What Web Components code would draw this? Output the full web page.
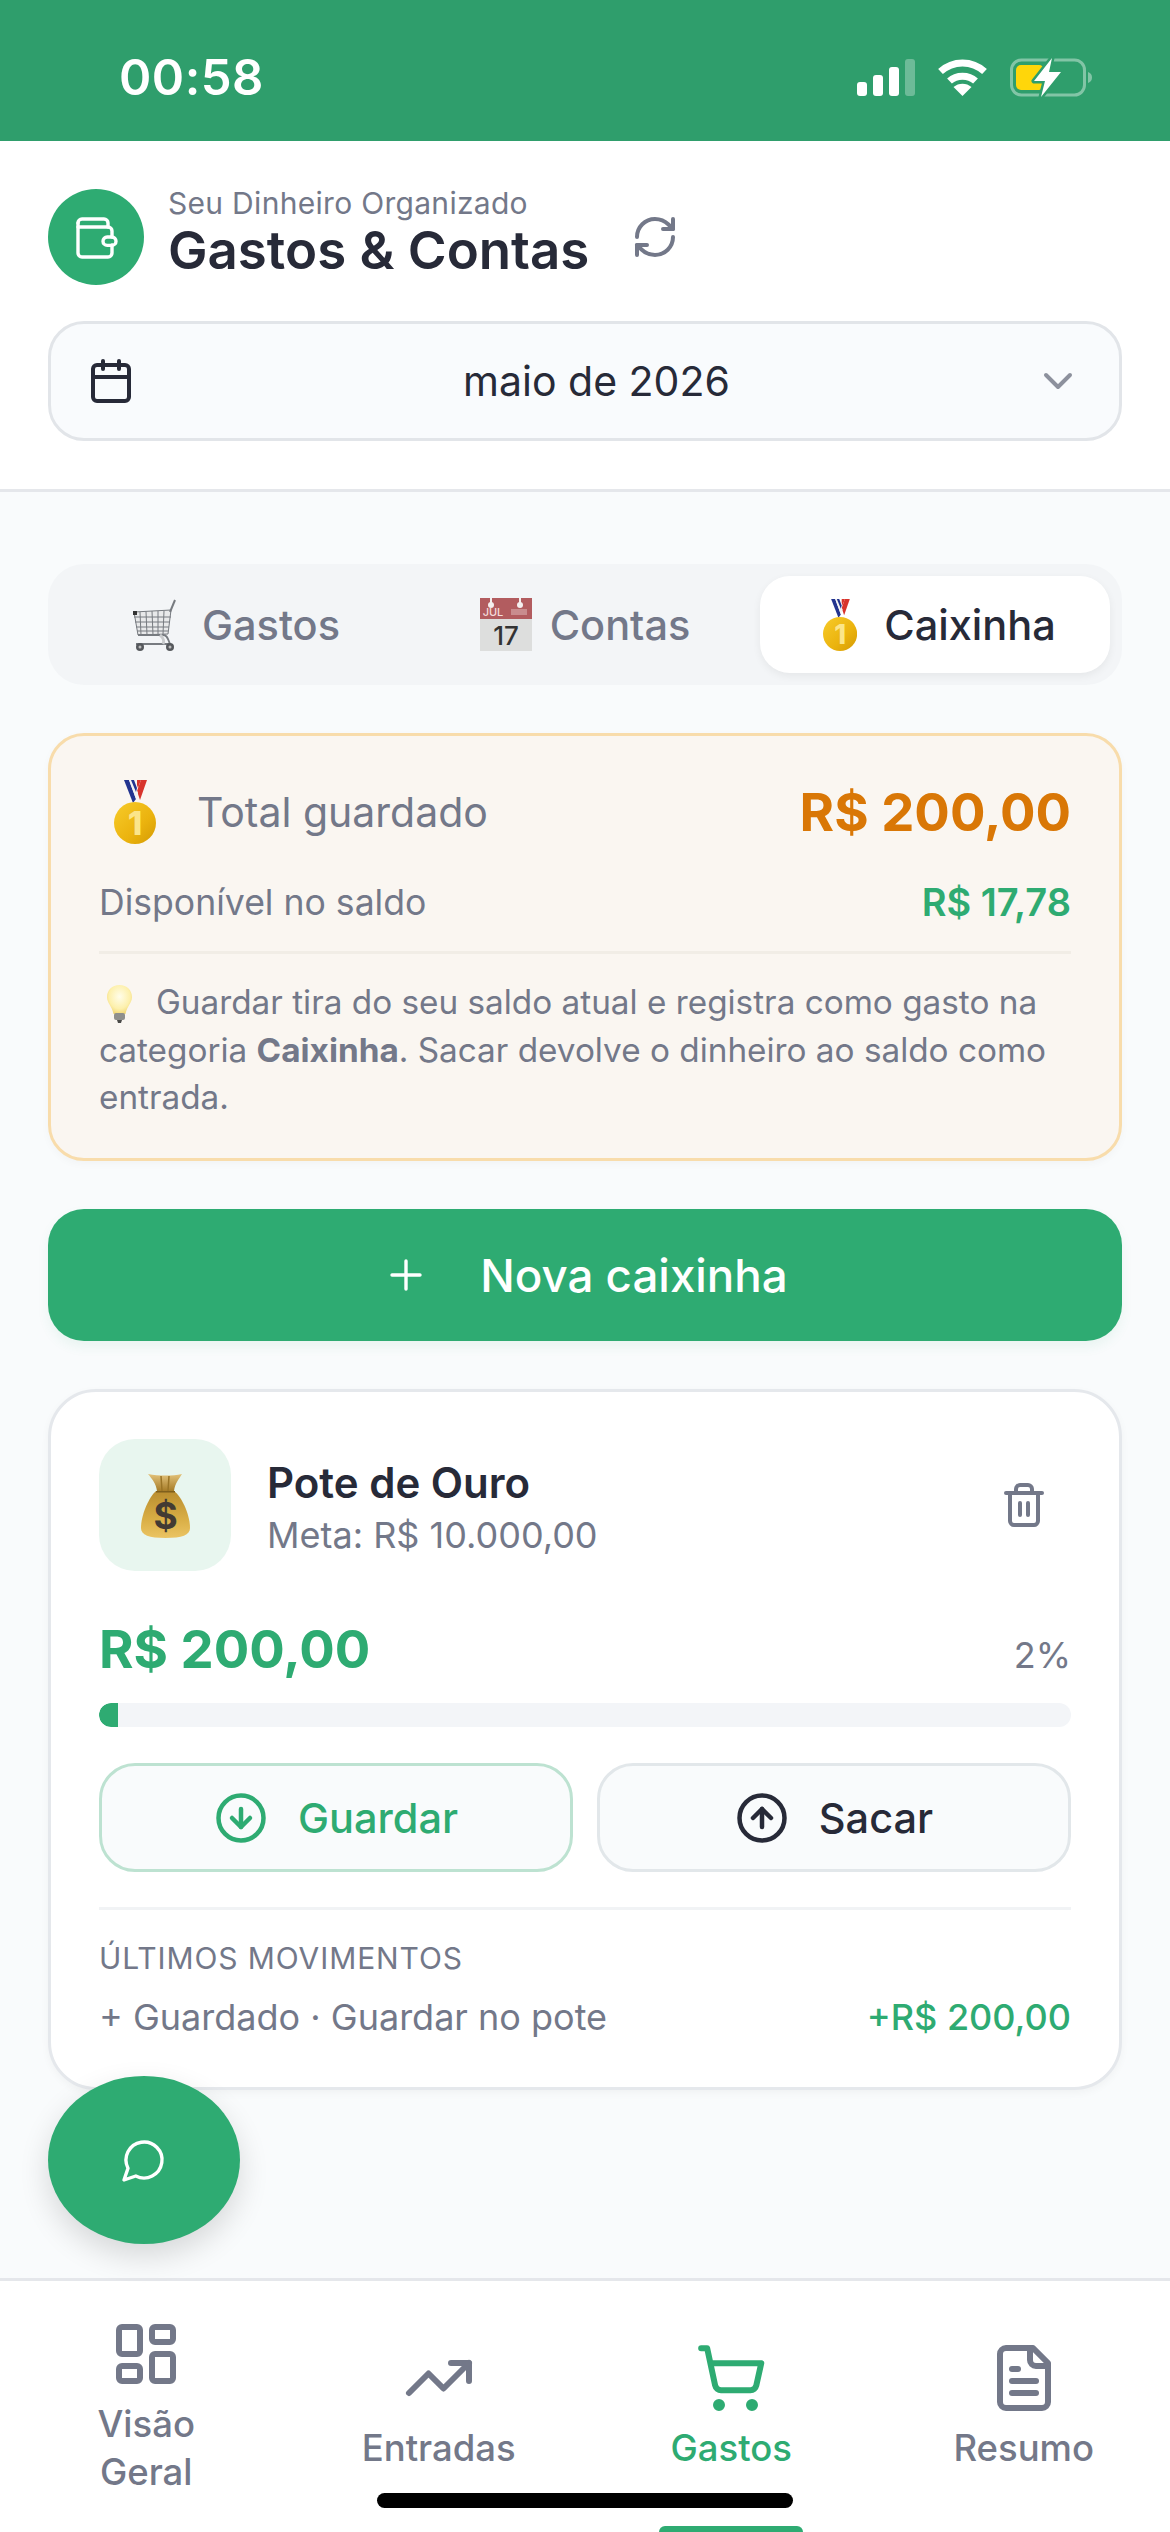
<!DOCTYPE html>
<html lang="pt-BR">
<head>
<meta charset="utf-8">
<title>Gastos & Contas</title>
<style>
  html, body { margin: 0; padding: 0; }
  body { font-family: Inter, "Noto Sans", sans-serif; color: #272a38; background: #f9fbfc; }
</style>
</head>
<body>
<app-shell>
  <status-bar time="00:58"></status-bar>
  <app-header title="Gastos &amp; Contas" subtitle="Seu Dinheiro Organizado" month="maio de 2026"></app-header>
  <main-area>
    <tab-bar>
      <tab-item><emoji-icon slot="icon" name="cart"></emoji-icon>Gastos</tab-item>
      <tab-item><emoji-icon slot="icon" name="calendar"></emoji-icon>Contas</tab-item>
      <tab-item active><emoji-icon slot="icon" name="medal" scale="0.8125" box="52"></emoji-icon>Caixinha</tab-item>
    </tab-bar>
    <summary-card total="R$ 200,00" available="R$ 17,78">Guardar tira do seu saldo atual e registra como gasto na<br>categoria <b>Caixinha</b>. Sacar devolve o dinheiro ao saldo como<br>entrada.</summary-card>
    <primary-button>Nova caixinha</primary-button>
    <pot-card name="Pote de Ouro" goal="Meta: R$ 10.000,00" amount="R$ 200,00" percent="2"
      moves-title="Últimos movimentos" move="+ Guardado · Guardar no pote" move-value="+R$ 200,00"></pot-card>
  </main-area>
  <bottom-nav>
    <nav-item icon="dashboard">Visão<br>Geral</nav-item>
    <nav-item icon="trending">Entradas</nav-item>
    <nav-item icon="cart" active>Gastos</nav-item>
    <nav-item icon="file">Resumo</nav-item>
  </bottom-nav>
  <chat-fab></chat-fab>
  <home-indicator></home-indicator>
</app-shell>

<script>
  const ICONS = {
    wallet: `<path d="M3 5v15a2 2 0 0 0 2 2h13a2 2 0 0 0 2-2v-4"/><path d="M20 12V9a2 2 0 0 0-2-2H3"/><path d="M3 5a2 2 0 0 1 2-2h11a2 2 0 0 1 2 2v2"/><rect x="15.500" y="12" width="6.500" height="4.200" rx="2.100"/>`,
    refresh: `<path d="M3 12a9 9 0 0 1 9-9 9.75 9.75 0 0 1 6.74 2.74L21 8"/><path d="M21 3v5h-5"/><path d="M21 12a9 9 0 0 1-9 9 9.75 9.75 0 0 1-6.74-2.74L3 16"/><path d="M8 16H3v5"/>`,
    calendar: `<path d="M8 2v4"/><path d="M16 2v4"/><rect x="3" y="4" width="18" height="18" rx="2"/><path d="M3 10h18"/>`,
    chevron: `<path d="m6 9 6 6 6-6"/>`,
    plus: `<path d="M5 12h14"/><path d="M12 5v14"/>`,
    trash: `<path d="M3 6h18"/><path d="M19 6v14c0 1-1 2-2 2H7c-1 0-2-1-2-2V6"/><path d="M8 6V4c0-1 1-2 2-2h4c1 0 2 1 2 2v2"/><path d="M10 11v6"/><path d="M14 11v6"/>`,
    down: `<circle cx="12" cy="12" r="10"/><path d="M12 8v8"/><path d="m8 12 4 4 4-4"/>`,
    up: `<circle cx="12" cy="12" r="10"/><path d="m16 12-4-4-4 4"/><path d="M12 16V8"/>`,
    message: `<path d="M7.9 20A9 9 0 1 0 4 16.1L2 22Z"/>`,
    dashboard: `<rect x="3" y="3" width="7" height="9" rx="1"/><rect x="14" y="3" width="7" height="5" rx="1"/><rect x="14" y="12" width="7" height="9" rx="1"/><rect x="3" y="16" width="7" height="5" rx="1"/>`,
    trending: `<path d="m22 7-8.500 8.500-5-5L2 17"/><path d="M16 7h6v6"/>`,
    cart: `<circle cx="8" cy="21" r="1"/><circle cx="19" cy="21" r="1"/><path d="M2.050 2.050h2l2.660 12.420a2 2 0 0 0 2 1.580h9.780a2 2 0 0 0 1.950-1.570l1.650-7.430H5.120"/>`,
    file: `<path d="M15 2H6a2 2 0 0 0-2 2v16a2 2 0 0 0 2 2h12a2 2 0 0 0 2-2V7Z"/><path d="M14 2v4a2 2 0 0 0 2 2h4"/><path d="M10 9H8"/><path d="M16 13H8"/><path d="M16 17H8"/>`
  };

  class AppIcon extends HTMLElement {
    connectedCallback() {
      const size = this.getAttribute("size") || 54;
      const stroke = this.getAttribute("stroke") || 2;
      this.attachShadow({ mode: "open" });
      this.shadowRoot.innerHTML = `
        <style>
          :host { display: block; width: ${size}px; height: ${size}px; flex: none; }
          svg { display: block; width: 100%; height: 100%; }
        </style>
        <svg viewBox="0 0 24 24" fill="none" stroke="currentColor" stroke-width="${stroke}" stroke-linecap="round" stroke-linejoin="round">${ICONS[this.getAttribute("name")]}</svg>
      `;
    }
  }
  customElements.define("app-icon", AppIcon);

  // the reference uses colour emoji, no emoji font here so they are drawn
  const EMOJI = {
    cart: { w: 54, h: 54, svg: `
      <g fill="none" stroke="#777b80" stroke-width="1">
        <path d="M4 14 L41 12 L38 36 L8 37 Z" fill="#e8e9ea"/>
        <path d="M4 19H41M5 24H40M6 29H39M7 33H38M10 14l1 23M16 13.500l1 23.500M22 13l1 24M28 13l0 24M34 13l-1 23"/>
        <path d="M40 14 L45 2" stroke-width="2"/>
        <path d="M8 37 L33 37 C38 37 38 42 40 46 L6 46" stroke-width="1.800" fill="none"/>
        <path d="M30 37 C34 40 34 44 33 46" stroke="#c9cbcd" stroke-width="3"/>
      </g>
      <rect x="3" y="13" width="4" height="4" fill="#333"/>
      <circle cx="10" cy="49" r="4" fill="#55585c"/><circle cx="40" cy="49" r="4" fill="#55585c"/>
      <circle cx="10" cy="49" r="1.500" fill="#bbb"/><circle cx="40" cy="49" r="1.500" fill="#bbb"/>` },
    calendar: { w: 52, h: 53, svg: `
      <rect x="0" y="0" width="52" height="53" fill="#dddedd"/>
      <rect x="0" y="0" width="52" height="21" fill="#b25c5f"/>
      <circle cx="11" cy="7" r="3" fill="#f4efef"/><rect x="10" y="0" width="2" height="6" fill="#f4efef"/>
      <circle cx="40" cy="7" r="3" fill="#f4efef"/><rect x="39" y="0" width="2" height="6" fill="#f4efef"/>
      <text x="13" y="18" font-family="Inter, sans-serif" font-size="11" fill="#f4dcdc" text-anchor="middle">JUL</text>
      <path d="M31 11h16v6H31" fill="#c98c8e"/>
      <text x="26" y="47" font-family="Inter, sans-serif" font-size="26" fill="#333" text-anchor="middle">17</text>` },
    medal: { w: 42, h: 64, svg: `
      <defs><linearGradient id="g" x1="0" y1="0" x2="1" y2="1"><stop offset="0" stop-color="#f7cb2a"/><stop offset=".6" stop-color="#ebb30e"/><stop offset="1" stop-color="#d49a04"/></linearGradient></defs>
      <path d="M10 0h5l7 19-3 4Z" fill="#23348f"/>
      <path d="M33 0h-6l-4 11 3 9Z" fill="#d8342c"/>
      <path d="M15 0h4l5 13-2 6Z" fill="#f3f3f3"/>
      <path d="M17 0h3l3 8-1 4Z" fill="#23348f"/>
      <path d="M23 0h4l-3 8-1-3Z" fill="#d8342c"/>
      <circle cx="21" cy="43" r="21" fill="url(#g)"/>
      <text x="21" y="55" font-family="Inter, sans-serif" font-size="33" font-weight="800" fill="#fbe58a" text-anchor="middle">1</text>` },
    bulb: { w: 27, h: 39, svg: `
      <defs><radialGradient id="b" cx=".5" cy=".4" r=".6"><stop offset="0" stop-color="#fffdea"/><stop offset=".7" stop-color="#fdf0ac"/><stop offset="1" stop-color="#f2d878"/></radialGradient></defs>
      <path d="M13.500 1C6 1 1 6.500 1 13c0 6 5 9 6.500 17h12C21 22 26 19 26 13 26 6.500 21 1 13.500 1Z" fill="url(#b)"/>
      <rect x="8" y="29" width="11" height="7" rx="2" fill="#8f8f8c"/>
      <path d="M11 36h5l-1 3h-3Z" fill="#4a4a48"/>` },
    bag: { w: 49, h: 65, svg: `
      <defs>
        <linearGradient id="m" x1="0" y1="0" x2="0" y2="1"><stop offset="0" stop-color="#b98d2f"/><stop offset=".6" stop-color="#d9ae45"/><stop offset="1" stop-color="#ebc463"/></linearGradient>
        <linearGradient id="n" x1="0" y1="0" x2="0" y2="1"><stop offset="0" stop-color="#e3c27a"/><stop offset="1" stop-color="#a67c28"/></linearGradient>
      </defs>
      <path d="M7 1c6 1.500 11 1.500 17.500 1.500S36 2.500 41 1c-3 5-7 9-8 17H16C15 10 11 6 7 1Z" fill="url(#n)"/>
      <path d="M20 3l1 15M28 3l-1 15" stroke="#9a7426" stroke-width="1.500" fill="none"/>
      <path d="M15 18C8 24 0 42 0 55 0 62 8 65 24.500 65S49 62 49 55C49 42 41 24 33 18Z" fill="url(#m)"/>
      <path d="M15 18h19v1.500H15Z" fill="#7f5f1c"/>
      <text x="24.500" y="56" font-family="Inter, sans-serif" font-size="37" font-weight="700" fill="#423a33" text-anchor="middle">$</text>` }
  };

  class EmojiIcon extends HTMLElement {
    connectedCallback() {
      const e = EMOJI[this.getAttribute("name")];
      const scale = Number(this.getAttribute("scale") || 1);
      const box = this.getAttribute("box") || e.w * scale;
      this.attachShadow({ mode: "open" });
      this.shadowRoot.innerHTML = `
        <style>
          :host { display: flex; justify-content: center; width: ${box}px; height: ${e.h * scale}px; flex: none; }
          svg { display: block; }
        </style>
        <svg width="${e.w * scale}" height="${e.h * scale}" viewBox="0 0 ${e.w} ${e.h}">${e.svg}</svg>
      `;
    }
  }
  customElements.define("emoji-icon", EmojiIcon);

  class AppShell extends HTMLElement {
    constructor() {
      super();
      this.attachShadow({ mode: "open" });
      this.shadowRoot.innerHTML = `
        <style>
          :host { display: flex; flex-direction: column; position: relative; width: 1170px; height: 2532px; overflow: hidden; background: #f9fbfc; }
        </style>
        <slot></slot>
      `;
    }
  }
  customElements.define("app-shell", AppShell);

  class StatusBar extends HTMLElement {
    connectedCallback() {
      this.attachShadow({ mode: "open" });
      this.shadowRoot.innerHTML = `
        <style>
          :host { display: flex; align-items: center; justify-content: space-between; box-sizing: border-box; height: 141px; padding: 14px 78px 0 119px; background: #2f9e6c; color: #fff; flex: none; }
          .time { font-size: 49px; font-weight: 600; letter-spacing: .5px; line-height: 60px; }
          .icons { display: flex; align-items: center; gap: 22px; }
          svg { display: block; }
        </style>
        <span class="time">${this.getAttribute("time")}</span>
        <div class="icons">
          <svg width="58" height="37" viewBox="0 0 58 37" fill="#fff">
            <rect x="0" y="23" width="10" height="14" rx="3"/>
            <rect x="16" y="16" width="10" height="21" rx="3"/>
            <rect x="32" y="8" width="10" height="29" rx="3"/>
            <rect x="48" y="0" width="10" height="37" rx="3" opacity=".3"/>
          </svg>
          <svg width="51" height="37" viewBox="0 0 51 37">
            <path d="M3.500 12.500C16 1 35 1 47.500 12.500" fill="none" stroke="#fff" stroke-width="7"/>
            <path d="M12.500 22C19.500 15.500 31.500 15.500 38.500 22" fill="none" stroke="#fff" stroke-width="7"/>
            <path d="M25.500 37 16.500 28C21.500 23.500 29.500 23.500 34.500 28Z" fill="#fff"/>
          </svg>
          <svg width="82" height="39" viewBox="0 0 82 39">
            <rect x="1.500" y="2" width="73" height="35" rx="10" fill="none" stroke="#fff" stroke-opacity=".4" stroke-width="3"/>
            <path d="M78 14c3 1 4 3 4 5.500S81 24 78 25Z" fill="#fff" fill-opacity=".4"/>
            <rect x="6" y="7" width="28" height="25" rx="5" fill="#ffd60a"/>
            <path d="M42 0 24 23h11l-4 16 20-25H39Z" fill="#fff" stroke="#2f9e6c" stroke-width="5" paint-order="stroke" stroke-linejoin="round"/>
          </svg>
        </div>
      `;
    }
  }
  customElements.define("status-bar", StatusBar);

  class AppHeader extends HTMLElement {
    connectedCallback() {
      this.attachShadow({ mode: "open" });
      this.shadowRoot.innerHTML = `
        <style>
          :host { display: block; box-sizing: border-box; height: 351px; padding: 48px 48px 0; background: #fff; border-bottom: 3px solid #e5e7eb; flex: none; }
          .top { display: flex; align-items: center; height: 96px; }
          .logo { display: flex; align-items: center; justify-content: center; width: 96px; height: 96px; border-radius: 50%; background: #2eab72; color: #fff; }
          .names { margin: 0 0 6px 24px; }
          .sub { font-size: 30px; line-height: 32px; color: #737889; letter-spacing: .3px; }
          .title { font-size: 52.800px; line-height: 62px; font-weight: 600; color: #272a38; }
          .refresh { margin-left: 42px; color: #737889; }
          .select { display: flex; align-items: center; box-sizing: border-box; height: 120px; margin-top: 36px; padding: 0 37px 0 36px; border: 3px solid #e2e5e9; border-radius: 36px; background: #f9fbfd; }
          .month { flex: 1; padding-left: 24px; text-align: center; font-size: 41px; color: #272a38; }
          .cal { color: #272a38; }
          .chev { color: #8d919d; }
        </style>
        <div class="top">
          <div class="logo"><app-icon name="wallet" size="48" stroke="1.700"></app-icon></div>
          <div class="names">
            <div class="sub">${this.getAttribute("subtitle")}</div>
            <div class="title">${this.getAttribute("title").replace("&", "&amp;")}</div>
          </div>
          <app-icon class="refresh" name="refresh" size="48"></app-icon>
        </div>
        <div class="select">
          <app-icon class="cal" name="calendar" size="48"></app-icon>
          <span class="month">${this.getAttribute("month")}</span>
          <app-icon class="chev" name="chevron" size="48"></app-icon>
        </div>
      `;
    }
  }
  customElements.define("app-header", AppHeader);

  class MainArea extends HTMLElement {
    constructor() {
      super();
      this.attachShadow({ mode: "open" });
      this.shadowRoot.innerHTML = `
        <style>
          :host { display: flex; flex-direction: column; gap: 48px; flex: 1; min-height: 0; padding: 72px 48px 0; }
        </style>
        <slot></slot>
      `;
    }
  }
  customElements.define("main-area", MainArea);

  class TabBar extends HTMLElement {
    constructor() {
      super();
      this.attachShadow({ mode: "open" });
      this.shadowRoot.innerHTML = `
        <style>
          :host { display: grid; grid-template-columns: repeat(3, 1fr); box-sizing: border-box; height: 121px; padding: 12px; border-radius: 36px; background: #f3f5f7; }
        </style>
        <slot></slot>
      `;
    }
  }
  customElements.define("tab-bar", TabBar);

  class TabItem extends HTMLElement {
    constructor() {
      super();
      this.attachShadow({ mode: "open" });
      this.shadowRoot.innerHTML = `
        <style>
          :host { display: flex; align-items: center; justify-content: center; gap: 18px; border-radius: 30px; font-size: 41.500px; font-weight: 450; color: #737889; }
          :host([active]) { background: #fff; color: #272a38; box-shadow: 0 3px 9px rgba(0, 0, 0, .06); }
        </style>
        <slot name="icon"></slot>
        <span><slot></slot></span>
      `;
    }
  }
  customElements.define("tab-item", TabItem);

  class SummaryCard extends HTMLElement {
    connectedCallback() {
      this.attachShadow({ mode: "open" });
      this.shadowRoot.innerHTML = `
        <style>
          :host { display: block; box-sizing: border-box; height: 428px; padding: 40px 48px 0; border: 3px solid #f8dcab; border-radius: 36px; background: #faf6f1; color: #737889; box-shadow: 0 3px 9px rgba(0, 0, 0, .03); }
          .row { display: flex; align-items: center; justify-content: space-between; }
          .total { height: 72px; }
          .left { display: flex; align-items: center; gap: 41px; margin-left: 15px; font-size: 41px; }
          .value { font-size: 52.700px; font-weight: 700; color: #d97706; }
          .avail { height: 48px; margin-top: 30px; font-size: 35.600px; }
          .avail b { font-size: 38px; font-weight: 600; color: #2eab72; }
          .tip { margin-top: 25px; padding-top: 25px; border-top: 3px solid #f1ede6; font-size: 33.300px; line-height: 47.500px; }
          .tip emoji-icon { display: inline-flex; vertical-align: -9px; margin: 0 23px 0 7px; }
          ::slotted(b) { font-weight: 700; }
        </style>
        <div class="row total">
          <div class="left"><emoji-icon name="medal"></emoji-icon>Total guardado</div>
          <span class="value">${this.getAttribute("total")}</span>
        </div>
        <div class="row avail"><span>Disponível no saldo</span><b>${this.getAttribute("available")}</b></div>
        <div class="tip"><emoji-icon name="bulb"></emoji-icon><slot></slot></div>
      `;
    }
  }
  customElements.define("summary-card", SummaryCard);

  class PrimaryButton extends HTMLElement {
    constructor() {
      super();
      this.attachShadow({ mode: "open" });
      this.shadowRoot.innerHTML = `
        <style>
          :host { display: flex; align-items: center; justify-content: center; gap: 50px; height: 132px; border-radius: 36px; background: #2eab72; color: #fff; font-size: 45.700px; font-weight: 450; box-shadow: 0 6px 12px rgba(46, 171, 114, .08); }
        </style>
        <app-icon name="plus" size="48" stroke="1.700"></app-icon>
        <span><slot></slot></span>
      `;
    }
  }
  customElements.define("primary-button", PrimaryButton);

  class ActionButton extends HTMLElement {
    connectedCallback() {
      const label = this.textContent;
      this.textContent = "";
      this.attachShadow({ mode: "open" });
      this.shadowRoot.innerHTML = `
        <style>
          :host { display: flex; align-items: center; justify-content: center; gap: 30px; box-sizing: border-box; height: 109px; border: 3px solid #e2e7ea; border-radius: 36px; background: #f9fbfc; color: #272a38; font-size: 41.500px; font-weight: 450; }
          :host([green]) { border-color: #bde2d1; color: #2eab72; }
        </style>
        <app-icon name="${this.getAttribute("icon")}" size="54"></app-icon>
        <span>${label}</span>
      `;
    }
  }
  customElements.define("action-button", ActionButton);

  class PotCard extends HTMLElement {
    connectedCallback() {
      const percent = this.getAttribute("percent");
      this.attachShadow({ mode: "open" });
      this.shadowRoot.innerHTML = `
        <style>
          :host { display: block; box-sizing: border-box; height: 701px; padding: 47px 48px 0; border: 3px solid #e5e8ec; border-radius: 48px; background: #fff; color: #737889; box-shadow: 0 3px 9px rgba(0, 0, 0, .04); }
          .head { display: flex; align-items: center; gap: 36px; }
          .thumb { display: flex; align-items: center; justify-content: center; width: 132px; height: 132px; border-radius: 36px; background: #e8f6ef; }
          .info { flex: 1; padding-top: 6px; }
          .name { font-size: 42px; line-height: 52px; font-weight: 600; color: #272a38; }
          .goal { margin-top: 2px; font-size: 36px; line-height: 48px; }
          .trash { margin-right: 23px; }
          .amounts { display: flex; align-items: baseline; justify-content: space-between; height: 72px; margin-top: 42px; line-height: 72px; font-size: 36px; }
          .amounts b { font-size: 52.700px; font-weight: 700; color: #2eab72; }
          .track { height: 24px; margin-top: 18px; border-radius: 12px; background: #f3f5f8; overflow: hidden; }
          .fill { width: ${percent}%; height: 100%; background: #2eab72; border-radius: 12px 0 0 12px; }
          .actions { display: grid; grid-template-columns: 1fr 1fr; gap: 24px; margin-top: 36px; }
          .moves { margin-top: 35px; padding-top: 30px; border-top: 3px solid #f1f3f5; }
          .moves h4 { margin: 0; font-size: 30px; line-height: 36px; font-weight: 400; letter-spacing: .9px; text-transform: uppercase; }
          .move { display: flex; justify-content: space-between; margin-top: 17px; font-size: 36px; line-height: 48px; }
          .move b { font-weight: 500; color: #2eab72; }
        </style>
        <div class="head">
          <div class="thumb"><emoji-icon name="bag"></emoji-icon></div>
          <div class="info">
            <div class="name">${this.getAttribute("name")}</div>
            <div class="goal">${this.getAttribute("goal")}</div>
          </div>
          <app-icon class="trash" name="trash" size="48"></app-icon>
        </div>
        <div class="amounts"><b>${this.getAttribute("amount")}</b><span>${percent}%</span></div>
        <div class="track"><div class="fill"></div></div>
        <div class="actions">
          <action-button green icon="down">Guardar</action-button>
          <action-button icon="up">Sacar</action-button>
        </div>
        <div class="moves">
          <h4>${this.getAttribute("moves-title")}</h4>
          <div class="move"><span>${this.getAttribute("move")}</span><b>${this.getAttribute("move-value")}</b></div>
        </div>
      `;
    }
  }
  customElements.define("pot-card", PotCard);

  class BottomNav extends HTMLElement {
    constructor() {
      super();
      this.attachShadow({ mode: "open" });
      this.shadowRoot.innerHTML = `
        <style>
          :host { display: grid; grid-template-columns: repeat(4, 1fr); box-sizing: border-box; height: 254px; background: #fff; border-top: 3px solid #e5e7eb; flex: none; }
        </style>
        <slot></slot>
      `;
    }
  }
  customElements.define("bottom-nav", BottomNav);

  class NavItem extends HTMLElement {
    connectedCallback() {
      const label = this.innerHTML;
      this.innerHTML = "";
      this.attachShadow({ mode: "open" });
      this.shadowRoot.innerHTML = `
        <style>
          :host { display: flex; flex-direction: column; align-items: center; justify-content: center; gap: 10px; position: relative; color: #737889; font-size: 36.500px; line-height: 48px; font-weight: 450; text-align: center; }
          :host([active]) { color: #2eab72; }
          :host([active])::after { content: ""; position: absolute; left: 50%; bottom: 0; width: 144px; height: 6px; margin-left: -72px; border-radius: 6px 6px 0 0; background: #2eab72; }
        </style>
        <app-icon name="${this.getAttribute("icon")}" size="72"></app-icon>
        <span>${label}</span>
      `;
    }
  }
  customElements.define("nav-item", NavItem);

  class ChatFab extends HTMLElement {
    constructor() {
      super();
      this.attachShadow({ mode: "open" });
      this.shadowRoot.innerHTML = `
        <style>
          :host { position: absolute; left: 48px; bottom: 288px; display: flex; align-items: center; justify-content: center; width: 192px; height: 168px; border-radius: 50%; background: #2eab72; color: #fff; box-shadow: 0 12px 30px rgba(0, 0, 0, .14); }
        </style>
        <app-icon name="message" size="48" stroke="1.700"></app-icon>
      `;
    }
  }
  customElements.define("chat-fab", ChatFab);

  class HomeIndicator extends HTMLElement {
    constructor() {
      super();
      this.attachShadow({ mode: "open" });
      this.shadowRoot.innerHTML = `
        <style>
          :host { position: absolute; left: 377px; bottom: 24px; width: 416px; height: 15px; border-radius: 8px; background: #000; }
        </style>
      `;
    }
  }
  customElements.define("home-indicator", HomeIndicator);
</script>
</body>
</html>
